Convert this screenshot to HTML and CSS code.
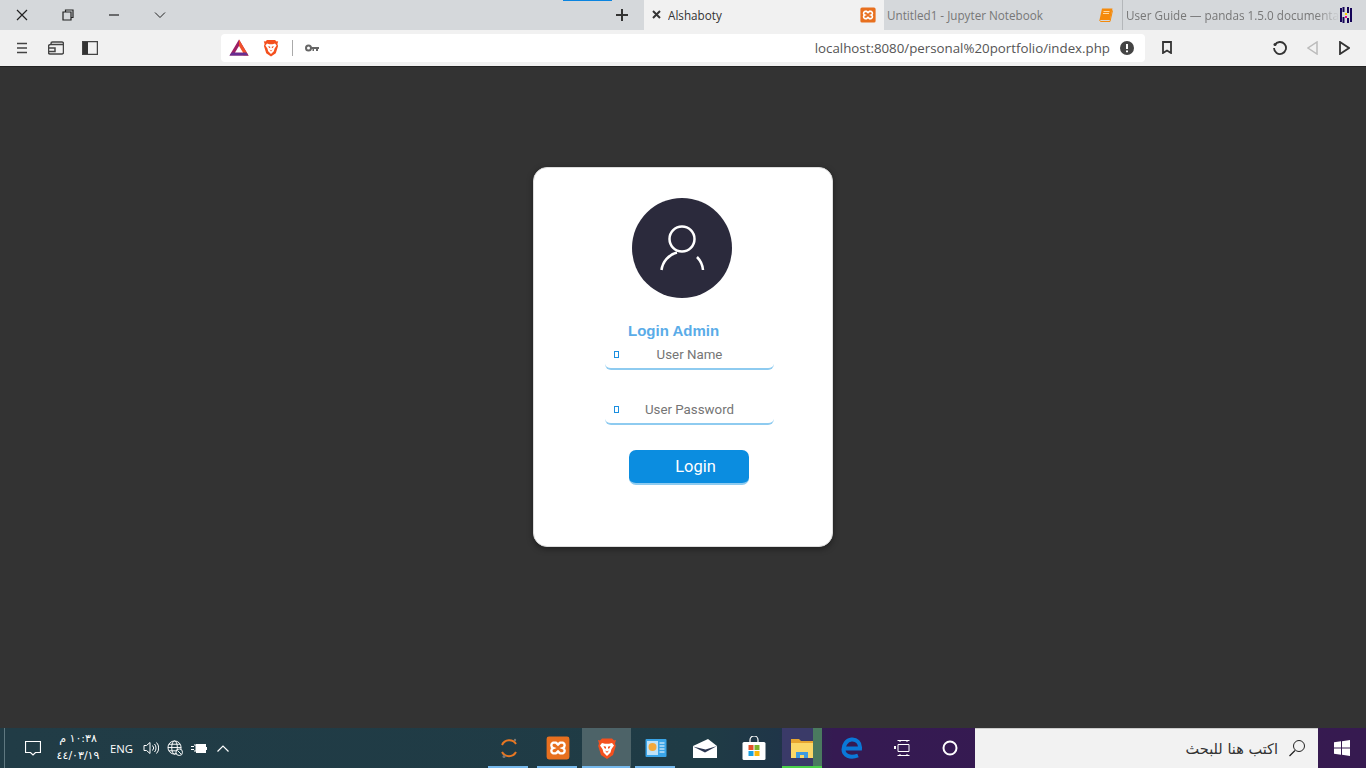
FILE: index.html
```html
<!DOCTYPE html>
<html lang="en">
<head>
    <meta charset="UTF-8">
    <title>Alshaboty</title>
    <link rel="stylesheet" href="styles.css">
</head>
<body>

    <!-- Shared icons -->
    <svg class="defs" aria-hidden="true">
        <symbol id="xampp" viewBox="0 0 20 20">
            <rect x="0.5" y="0.5" width="19" height="19" rx="2" fill="#e8701f"/>
            <path d="M6 5.5h2.2l1.8 1.6 1.8-1.6H14a2.4 2.4 0 0 1 0 4.5 2.4 2.4 0 0 1 0 4.5h-2.2L10 12.900l-1.800 1.600H6a2.400 2.400 0 0 1 0-4.500 2.400 2.400 0 0 1 0-4.500z" fill="none" stroke="#fff" stroke-width="2"/>
        </symbol>
        <symbol id="brave" viewBox="0 0 20 22">
            <path d="M5 1h10l2 2 2-.5-1 3.500.8 2.500-2.800 9L10 21.500 4 17.500 1.200 8.500 2 6 1 2.500 3 3z" fill="#f4501e"/>
            <path d="M5 5.500l3 .8h4l3-.8 2 2.500-2.500 3.500-1 3.500L10 18.500l-3.500-3.500-1-3.500L3 8z" fill="#fff"/>
            <path d="M6.500 8.500l2.500.8v2l-1.500-.5zM13.500 8.500l-2.500.8v2l1.500-.5zM8 13l2 1 2-1-2 2.500z" fill="#f4501e"/>
        </symbol>
    </svg>

    <!-- Tab strip -->
    <div class="tabstrip">
        <div class="window-controls">
            <button class="win-btn">
                <svg width="12" height="12" viewBox="0 0 12 12"><path d="M1 1l10 10M11 1L1 11" class="line"/></svg>
            </button>
            <button class="win-btn">
                <svg width="12" height="12" viewBox="0 0 12 12"><path d="M3.500 2.500V1h7.500v7.500H9M1 3h8v8H1z" class="line"/></svg>
            </button>
            <button class="win-btn">
                <svg width="12" height="12" viewBox="0 0 12 12"><path d="M1 6h10" class="line"/></svg>
            </button>
            <button class="win-btn">
                <svg width="12" height="12" viewBox="0 0 12 12"><path d="M1 3.500l5 5 5-5" class="line thin"/></svg>
            </button>
        </div>
        <div class="new-tab">
            <svg width="12" height="12" viewBox="0 0 12 12"><path d="M6 0v12M0 6h12" class="line bold"/></svg>
        </div>
        <div class="tab active">
            <svg class="tab-close" width="9" height="9" viewBox="0 0 9 9"><path d="M1 1l7 7M8 1L1 8" class="line bold"/></svg>
            <span class="tab-title">Alshaboty</span>
            <svg class="favicon" width="16" height="16"><use href="#xampp"/></svg>
        </div>
        <div class="tab">
            <span class="tab-title">Untitled1 - Jupyter Notebook</span>
            <svg class="favicon" width="16" height="16" viewBox="0 0 16 16">
                <path d="M4 1.500h10.500L12 13H1.500z" fill="#f58a0b"/>
                <path d="M5.500 4.500h6M5 6.500h6" stroke="#ffd9a0" stroke-width="1"/>
                <path d="M1.500 13l1 1.500H12l2.500-11" fill="none" stroke="#f58a0b" stroke-width="1"/>
            </svg>
        </div>
        <div class="tab last">
            <span class="tab-title fade">User Guide — pandas 1.5.0 documentation</span>
            <svg class="favicon" width="12" height="16" viewBox="0 0 12 16">
                <path d="M1 1v14M3.500 0v5M3.500 10v6M8 0v6M8 11v5M11 1v14" stroke="#150458" stroke-width="2"/>
                <rect x="5" y="6" width="2" height="2" fill="#ffca00"/>
                <rect x="5" y="9" width="2" height="2" fill="#e70488"/>
            </svg>
        </div>
        <span class="tab-progress"></span>
    </div>

    <!-- Toolbar -->
    <div class="toolbar">
        <div class="tool-group left">
            <button class="tool-btn">
                <svg width="10" height="12" viewBox="0 0 10 12"><path d="M0 1.500h10M0 6h10M0 10.500h10" class="line soft"/></svg>
            </button>
            <button class="tool-btn">
                <svg width="16" height="14" viewBox="0 0 16 14"><path d="M3 3.500V2.500a1.500 1.500 0 0 1 1.500-1.500H14a1.500 1.500 0 0 1 1.500 1.500v9A1.500 1.500 0 0 1 14 13H2a1.500 1.500 0 0 1-1.500-1.500v-6A2 2 0 0 1 2.500 3.500H15M1 7h6v3.500H1" class="line soft"/></svg>
            </button>
            <button class="tool-btn">
                <svg width="16" height="14" viewBox="0 0 16 14"><rect x="0.500" y="0.500" width="15" height="13" fill="#fff" class="line soft"/><rect x="1" y="1" width="5" height="12" fill="#333"/></svg>
            </button>
        </div>
        <div class="address-bar">
            <svg class="bat" width="20" height="17" viewBox="0 0 20 17">
                <path d="M10 0.500L0.500 16.500h19z" fill="#9e1f63"/>
                <path d="M10 0.500l9.500 16h-5L10 8z" fill="#f0512b"/>
                <path d="M0.500 16.500h19l-2.300-3H2.800z" fill="#662d91"/>
                <path d="M10 7l-4 6.500h8z" fill="#fff"/>
            </svg>
            <svg class="shield" width="16" height="18"><use href="#brave"/></svg>
            <span class="divider"></span>
            <svg class="key" width="14" height="8" viewBox="0 0 14 8">
                <circle cx="3.500" cy="4" r="2.500" fill="none" stroke="#666" stroke-width="2"/>
                <path d="M6 3h8v2h-1v2h-2V5H9v2H7.500V5H6z" fill="#666"/>
            </svg>
            <span class="url">localhost:8080/personal%20portfolio/index.php</span>
            <svg class="alert" width="14" height="14" viewBox="0 0 14 14">
                <circle cx="7" cy="7" r="7" fill="#444"/>
                <path d="M7 3v5M7 9.500v1.700" stroke="#fff" stroke-width="2"/>
            </svg>
        </div>
        <div class="tool-group bookmark">
            <svg width="10" height="13" viewBox="0 0 10 13"><path d="M1 1h8v11L5 9.500 1 12z" class="line soft heavy"/></svg>
        </div>
        <div class="tool-group nav">
            <button class="tool-btn">
                <svg width="14" height="14" viewBox="0 0 14 14"><path d="M1.800 4A6 6 0 1 1 1 7" class="line soft heavy"/><circle cx="2" cy="3.500" r="1.500" fill="#333"/></svg>
            </button>
            <button class="tool-btn">
                <svg width="11" height="14" viewBox="0 0 11 14"><path d="M10 1v12L1 7z" class="line faded"/></svg>
            </button>
            <button class="tool-btn">
                <svg width="11" height="14" viewBox="0 0 11 14"><path d="M1 1v12l9-6z" class="line soft heavy"/></svg>
            </button>
        </div>
    </div>

    <!-- Main Content -->
    <div class="main">
        <form class="login-card">
            <div class="avatar">
                <svg width="100" height="100" viewBox="0 0 100 100">
                    <circle cx="50" cy="41" r="12.500" class="person"/>
                    <path d="M29.500 72A21 21 0 0 1 45 54.500M65 59A21 21 0 0 1 71 72" class="person"/>
                </svg>
            </div>
            <h2>Login Admin</h2>
            <div class="field">
                <span class="missing-glyph"></span>
                <input type="text" placeholder="User Name">
            </div>
            <div class="field">
                <span class="missing-glyph"></span>
                <input type="password" placeholder="User Password">
            </div>
            <button type="button" class="login-btn">Login</button>
        </form>
    </div>

    <!-- Taskbar -->
    <div class="taskbar">
        <span class="edge-line"></span>
        <div class="tray-btn action-center">
            <svg width="16" height="15" viewBox="0 0 16 15"><path d="M0.500 0.500h15v11h-5L8 14l-2.500-2.500h-5z" class="line white"/></svg>
        </div>
        <div class="clock">
            <span dir="rtl">١٠:٣٨ م</span>
            <span>٤٤/٠٣/١٩</span>
        </div>
        <span class="lang">ENG</span>
        <div class="tray-icons">
            <svg width="16" height="14" viewBox="0 0 16 14"><path d="M1 4.500h2.500L7 1.500v11L3.500 9.500H1zM9.500 4.500a3.500 3.500 0 0 1 0 5M11.500 3a6 6 0 0 1 0 8M13.500 1.500a8 8 0 0 1 0 11" class="line white thin"/></svg>
            <svg width="16" height="16" viewBox="0 0 17 17"><circle cx="8" cy="8" r="7" class="line white thin"/><ellipse cx="8" cy="8" rx="3" ry="7" class="line white thin"/><path d="M1 8h14M2 4.500h12M2 11.500h12" class="line white thin"/><circle cx="13" cy="13" r="3.500" fill="#21404a" stroke="#fff"/><path d="M11 11l4 4" stroke="#fff"/></svg>
            <svg width="16" height="11" viewBox="0 0 16 11"><path d="M0 3.500h3M0 6.500h3M3 2h2v6H3" class="line white thin"/><rect x="5.500" y="1.500" width="9" height="8" class="line white thin"/><rect x="6" y="2" width="8" height="7" fill="#fff"/><rect x="15" y="4" width="1" height="3" fill="#fff"/></svg>
            <svg class="chevron" width="12" height="7" viewBox="0 0 12 7"><path d="M0.500 6.500L6 1l5.500 5.500" class="line white"/></svg>
        </div>
        <div class="task-apps">
            <div class="app running">
                <svg width="20" height="22" viewBox="0 0 20 22">
                    <path d="M3 8a8 8 0 0 1 14-1M3 15a8 8 0 0 0 14 0" fill="none" stroke="#e87722" stroke-width="2"/>
                    <circle cx="16" cy="3" r="1.200" fill="#777"/><circle cx="5" cy="19.500" r="1.500" fill="#777"/>
                </svg>
            </div>
            <div class="app running">
                <svg width="24" height="24"><use href="#xampp"/></svg>
            </div>
            <div class="app running current">
                <svg width="20" height="23"><use href="#brave"/></svg>
            </div>
            <div class="app running">
                <svg width="22" height="20" viewBox="0 0 22 20">
                    <rect x="0.500" y="1" width="21" height="18" rx="1" fill="#3aa5e8"/>
                    <rect x="2" y="3" width="11" height="14" fill="#bfe2f7"/>
                    <circle cx="7.500" cy="9" r="4" fill="#f2a93b"/>
                    <path d="M14.500 5h5M14.500 8h5M14.500 11h5M14.500 14h5" stroke="#fff"/>
                </svg>
            </div>
            <div class="app">
                <svg width="24" height="19" viewBox="0 0 24 19"><path d="M0 7L15 0l9 7v12H0z" fill="#fff"/><path d="M0 7.500l12 6 12-6.500-11.500 3.500z" fill="#2a3550"/></svg>
            </div>
            <div class="app">
                <svg width="24" height="24" viewBox="0 0 24 24">
                    <path d="M8 7V4a4 4 0 0 1 8 0v3" fill="none" stroke="#fff" stroke-width="1.200"/>
                    <rect x="0.500" y="6" width="23" height="18" rx="1.500" fill="#fff"/>
                    <rect x="6.500" y="9" width="5" height="5" fill="#e2502a"/><rect x="12.500" y="9" width="5" height="5" fill="#7db32a"/>
                    <rect x="6.500" y="15" width="5" height="5" fill="#1ba1e2"/><rect x="12.500" y="15" width="5" height="5" fill="#fab80a"/>
                </svg>
            </div>
            <div class="app running explorer">
                <svg width="22" height="20" viewBox="0 0 22 20">
                    <path d="M0 1h8l2 2h12v3H0z" fill="#e7a52f"/>
                    <rect y="5" width="22" height="15" fill="#fbd767"/>
                    <path d="M5 20v-6h12v6h-4v-3H9v3z" fill="#3f9ae0"/>
                </svg>
            </div>
            <div class="app">
                <svg width="22" height="22" viewBox="0 0 22 22"><path d="M3 11.500h16C19.500 5.500 15.500 2 10.500 2.500 5.500 3 2.500 8 2.500 12.500c0 6 6.500 9 14.500 6" fill="none" stroke="#0a78d7" stroke-width="4"/></svg>
            </div>
            <div class="app taskview">
                <svg width="16" height="16" viewBox="0 0 16 16"><path d="M3.500 .5h12M3.500 15.500h12M4 4.500h11v7H4zM6 0v2M13 0v2M6 14v2M13 14v2" class="line white thin"/><rect y="6" width="2" height="3" fill="#fff"/></svg>
            </div>
            <div class="app">
                <svg width="16" height="16" viewBox="0 0 16 16"><circle cx="8" cy="8" r="6.500" fill="none" stroke="#fff" stroke-width="2"/></svg>
            </div>
        </div>
        <div class="search-box">
            <svg width="16" height="17" viewBox="0 0 16 17"><circle cx="10" cy="6" r="5.500" fill="none" stroke="#222"/><path d="M6 10.500L.5 16" stroke="#222" stroke-width="1.200"/></svg>
            <span dir="rtl">اكتب هنا للبحث</span>
        </div>
        <div class="start-btn">
            <svg width="16" height="16" viewBox="0 0 16 16"><path d="M0 2.300L7 1.300v6.200H0zM8 1.200L16 0v7.500H8zM0 8.500h7v6.200l-7-1zM8 8.500h8V16l-8-1.200z" fill="#fff"/></svg>
        </div>
    </div>

</body>
</html>
```

FILE: styles.css
```css
* {
    margin: 0;
    padding: 0;
    box-sizing: border-box;
}

body {
    height: 100vh;
    display: flex;
    flex-direction: column;
    overflow: hidden;
    background: #333;
    font-family: 'Open Sans', sans-serif;
}

button {
    border: none;
    background: none;
    display: flex;
    align-items: center;
    justify-content: center;
}

svg {
    display: block;
    flex-shrink: 0;
}

.defs {
    position: absolute;
    width: 0;
    height: 0;
}

/* shared stroke styles */
.line {
    fill: none;
    stroke: #222;
    stroke-width: 1.2;
}

.line.thin {
    stroke-width: 1;
}

.line.bold {
    stroke-width: 2;
    stroke: #333;
}

.line.soft {
    stroke: #444;
    stroke-width: 1.500;
}

.line.heavy {
    stroke: #333;
    stroke-width: 1.800;
}

.line.faded {
    stroke: #bbb;
    stroke-width: 1.500;
}

.line.white {
    stroke: #fff;
}

/* Tab strip */
.tabstrip {
    position: relative;
    height: 30px;
    flex-shrink: 0;
    display: flex;
    background: #d5d8db;
}

.window-controls {
    display: flex;
    margin-left: -1px;
    width: 601px;
}

.win-btn {
    width: 46px;
}

.new-tab {
    width: 44px;
    display: flex;
    align-items: center;
    justify-content: center;
}

.tab {
    width: 238px;
    display: flex;
    align-items: center;
    padding-left: 3px;
    padding-right: 8px;
    padding-bottom: 1px;
    font-size: 11.700px;
    color: #777;
}

.tab.active {
    width: 240px;
    padding-left: 8px;
    padding-right: 8px;
    background: #f1f1f1;
    color: #333;
}

.tab.last {
    width: 244px;
    padding-left: 3px;
    padding-right: 14px;
    border-left: 1px solid #b4b7ba;
}

.tab-close {
    margin: 0 7px 0 0;
}

.tab-title {
    flex: 1;
    white-space: nowrap;
    overflow: hidden;
}

.tab-title.fade {
    -webkit-mask-image: linear-gradient(to left, transparent 0, #000 24px);
    mask-image: linear-gradient(to left, transparent 0, #000 24px);
}

.tab-progress {
    position: absolute;
    top: 0;
    left: 563px;
    width: 49px;
    height: 1px;
    background: #0a84e0;
}

/* Toolbar */
.toolbar {
    height: 37px;
    flex-shrink: 0;
    display: flex;
    align-items: center;
    background: #f1f1f1;
    border-bottom: 1px solid #222;
    padding-bottom: 1px;
}

.tool-group {
    display: flex;
    align-items: center;
    flex-shrink: 0;
}

.tool-group.left {
    width: 221px;
    padding-left: 5px;
}

.tool-group.left .tool-btn {
    width: 34px;
}

.tool-group.bookmark {
    width: 44px;
    justify-content: center;
}

.tool-group.nav {
    margin-left: 75px;
}

.tool-btn {
    width: 32px;
    height: 28px;
}

.address-bar {
    width: 924px;
    height: 28px;
    flex-shrink: 0;
    display: flex;
    align-items: center;
    padding-left: 8px;
    padding-right: 11px;
    background: #fff;
    border-radius: 4px;
}

.shield {
    margin-left: 14px;
}

.divider {
    width: 1px;
    height: 16px;
    margin-left: 13px;
    background: #aaa;
}

.key {
    margin-left: 12px;
}

.url {
    flex: 1;
    text-align: right;
    padding-right: 10px;
    font-size: 13.300px;
    color: #555;
    white-space: nowrap;
}

/* Main Content */
.main {
    flex: 1;
    display: flex;
    justify-content: center;
    align-items: flex-start;
    padding-top: 100px;
    background: #333;
}

.login-card {
    width: 300px;
    height: 380px;
    padding: 30px 0 0 71px;
    display: flex;
    flex-direction: column;
    align-items: flex-start;
    background: #fff;
    border: 1px solid #ddd;
    border-radius: 14px;
    box-shadow: 0 2px 6px rgba(0, 0, 0, 0.4);
    font-family: 'Roboto', sans-serif;
}

.avatar {
    width: 100px;
    height: 100px;
    margin-left: 27px;
    border-radius: 50%;
    background: #2b2a3c;
}

.person {
    fill: none;
    stroke: #fff;
    stroke-width: 2.500;
}

h2 {
    margin: 24px 0 0 23px;
    font-family: 'Liberation Sans', sans-serif;
    font-size: 15px;
    font-weight: 700;
    line-height: 17px;
    color: #5aace8;
}

.field {
    position: relative;
    width: 169px;
    height: 31px;
    margin-bottom: 24px;
    padding-top: 1px;
    border-bottom: 2px solid #8ecbf0;
    border-radius: 0 0 6px 6px;
}

.field input {
    width: 100%;
    height: 28px;
    padding: 0;
    border: none;
    outline: none;
    background: none;
    text-align: center;
    font-family: 'Roboto', sans-serif;
    font-size: 13.300px;
}

.field input::placeholder {
    color: #757575;
    opacity: 1;
}

.missing-glyph {
    position: absolute;
    left: 9px;
    top: 12px;
    width: 5px;
    height: 7px;
    border: 1px solid #1b8fe0;
}

.login-btn {
    width: 120px;
    height: 35px;
    margin: 1px 0 0 24px;
    padding-left: 13px;
    background: #0b8de0;
    border-bottom: 2px solid #8ecbf0;
    border-radius: 7px;
    color: #fff;
    font-family: 'Roboto', sans-serif;
    font-size: 16.500px;
}

/* Taskbar */
.taskbar {
    height: 40px;
    flex-shrink: 0;
    display: flex;
    align-items: center;
    background: linear-gradient(to right, #213c46 0, #1f3b45 52%, #1f3548 57%, #351a52 61%, #361a50 100%);
    color: #fff;
}

.edge-line {
    width: 1px;
    height: 40px;
    margin-left: 4px;
    background: #5f7880;
}

.action-center {
    width: 52px;
    padding-left: 4px;
    display: flex;
    justify-content: center;
}

.clock {
    width: 42px;
    display: flex;
    flex-direction: column;
    align-items: center;
    margin-top: -2px;
    font-family: 'DejaVu Sans', sans-serif;
    font-size: 11px;
    line-height: 17px;
    white-space: nowrap;
}

.clock span {
    display: block;
}

.lang {
    margin-left: 11px;
    width: 24px;
    font-size: 11.300px;
}

.tray-icons {
    width: 103px;
    margin-left: 9px;
    display: flex;
    align-items: center;
    gap: 8px;
}

.chevron {
    margin-left: 2px;
}

.task-apps {
    margin-left: 238px;
    display: flex;
    width: 491px;
    height: 40px;
    flex-shrink: 0;
}

.app {
    position: relative;
    width: 49px;
    display: flex;
    align-items: center;
    justify-content: center;
}

.app.taskview {
    padding-left: 3px;
}

/* blue bar below an open app */
.app.running::after {
    content: "";
    position: absolute;
    left: 4px;
    right: 5px;
    bottom: 0;
    height: 2px;
    background: #76b9ed;
}

.app.current {
    background: #4d6368;
}

.app.current::after {
    left: 0;
    right: 1px;
}

.app.explorer {
    width: 40px;
    margin: 0 5px 0 4px;
    background: linear-gradient(to right, #3a3a68 0, #3a3a68 78%, #4a7a5f 78%);
}

.app.explorer::after {
    left: 0;
    right: 0;
    background: #4ad04a;
}

.search-box {
    width: 343px;
    height: 40px;
    flex-shrink: 0;
    display: flex;
    flex-direction: row-reverse;
    justify-content: flex-start;
    align-items: center;
    gap: 11px;
    padding-right: 13px;
    background: #f2f2f2;
    border-top: 1px solid #ccc;
    color: #333;
    font-family: 'DejaVu Sans', sans-serif;
    font-size: 14.500px;
}

.start-btn {
    width: 48px;
    flex-shrink: 0;
    display: flex;
    justify-content: center;
}
```
